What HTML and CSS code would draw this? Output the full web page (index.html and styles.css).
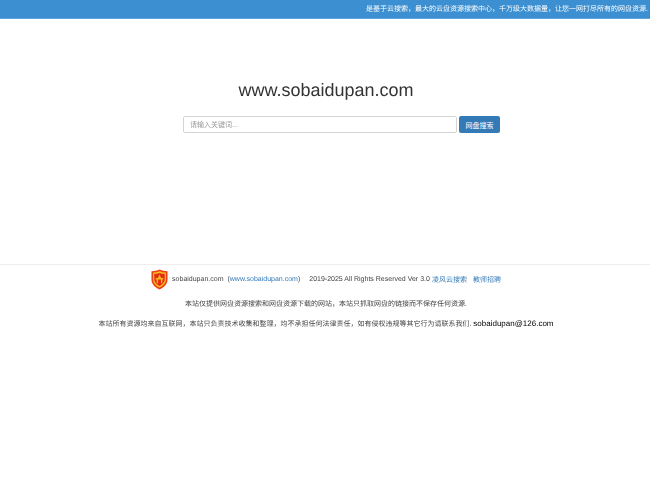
FILE: index.html
```html
<!DOCTYPE html>
<html lang="zh">
<head>
<meta charset="utf-8">
<title>www.sobaidupan.com</title>
<link rel="stylesheet" href="styles.css">
</head>
<body>
<header class="banner"><p class="banner-text">是基于云搜索，最大的云盘资源搜索中心，千万级大数据量，让您一网打尽所有的网盘资源.</p></header>
<main class="hero">
  <h1 class="title">www.sobaidupan.com</h1>
  <form class="search">
    <input class="search-input" type="text" placeholder="请输入关键词...">
    <button class="search-btn" type="button">网盘搜索</button>
  </form>
</main>
<footer class="footer">
  <div class="footer-line">
    <svg class="logo" viewBox="0 0 18 22" aria-hidden="true">
      <path d="M9 .5C11.500 1.800 14.500 2.200 17.500 2.200V11C17.500 16 13.500 19.500 9 21.500C4.500 19.500 .5 16 .5 11V2.200C3.500 2.200 6.500 1.800 9 .5Z" fill="#ee4212"/>
      <path d="M9 2.300C11 3.200 13.300 3.600 15.800 3.600V10.900C15.800 14.800 12.500 17.800 9 19.600C5.500 17.800 2.200 14.800 2.200 10.900V3.600C4.700 3.600 7 3.200 9 2.300Z" fill="#f9c01c"/>
      <path d="M9 4C10.800 4.800 12.600 5.100 14.500 5.100V10.800C14.500 14 11.900 16.400 9 18C6.100 16.400 3.500 14 3.500 10.800V5.100C5.400 5.100 7.200 4.800 9 4Z" fill="#e42c14"/>
      <path d="M9 5.500L10 8H8ZM5 9.500H13V11H5ZM6 11H7.500V15H6ZM10.500 11H12V15H10.500ZM7.500 8H10.500V9.500H7.500Z" fill="#f8b51c"/>
    </svg>
    <span>sobaidupan.com</span>
    <span class="domain">(<a href="#">www.sobaidupan.com</a>)</span>
    <span class="rights">2019-2025 All Rights Reserved Ver 3.0</span>
    <a class="link-a" href="#">凌风云搜索</a>
    <a class="link-b" href="#">教师招聘</a>
  </div>
  <p class="note note-first">本站仅提供网盘资源搜索和网盘资源下载的网站，本站只抓取网盘的链接而不保存任何资源.</p>
  <p class="note note-second">本站所有资源均来自互联网，本站只负责技术收集和整理，均不承担任何法律责任，如有侵权违规等其它行为请联系我们. <span class="mail">sobaidupan@126.com</span></p>
</footer>
</body>
</html>
```
FILE: styles.css
```css
* { box-sizing: border-box; }
html, body { margin: 0; padding: 0; }
body {
  background: #fff;
  color: #333;
  font-family: "Liberation Sans", "Noto Sans CJK SC", sans-serif;
  font-size: 7px;
  height: 500px;
  overflow: hidden;
  text-rendering: geometricPrecision;
  filter: blur(.45px);
}
a { color: #337ab7; text-decoration: none; }
.banner {
  height: 19px;
  background: #3c8fd0;
  color: #fff;
  border-bottom: 1px solid #5ba3db;
  display: flex;
  align-items: center;
  justify-content: flex-end;
  padding-right: 2px;
}
.banner-text { margin: 0; font-size: 7px; white-space: nowrap; }
.hero {
  height: 245px;
  padding-top: 60px;
  display: flex;
  flex-direction: column;
  align-items: center;
}
.title {
  margin: 0 0 0 2px;
  font-size: 18px;
  font-weight: 400;
  line-height: 22px;
  text-align: center;
}
.search {
  display: flex;
  gap: 2px;
  margin-top: 15px;
  margin-left: 33px;
}
.search-input {
  width: 274px;
  height: 17px;
  padding: 0 6px;
  border: 1px solid #d4d4d4;
  border-radius: 2px;
  font: 7px "Liberation Sans", "Noto Sans CJK SC", sans-serif;
  color: #555;
}
.search-input::placeholder { color: #999; opacity: 1; }
.search-btn {
  width: 41px;
  height: 17px;
  padding: 0;
  background: #337ab7;
  border: 0;
  border-radius: 2px;
  color: #fff;
  font: 7px "Liberation Sans", "Noto Sans CJK SC", sans-serif;
}
.footer {
  border-top: 1px solid #eee;
  text-align: center;
  font-size: 7px;
}
.footer-line {
  display: flex;
  align-items: center;
  justify-content: center;
  height: 29px;
  margin-left: 2px;
  color: #444;
  white-space: nowrap;
}
.logo { width: 17px; height: 21px; margin-right: 4px; }
.domain { margin-left: 4px; }
.rights { margin-left: 9px; }
.link-a { margin-left: 2px; }
.link-b { margin-left: 6px; }
.note { margin: 0 0 0 2px; white-space: nowrap; color: #444; font-size: 7px; line-height: 11px; }
.note-first { margin-top: 5px; }
.note-second { margin-top: 8px; }
.mail { color: #000; font-size: 8px; }
```
